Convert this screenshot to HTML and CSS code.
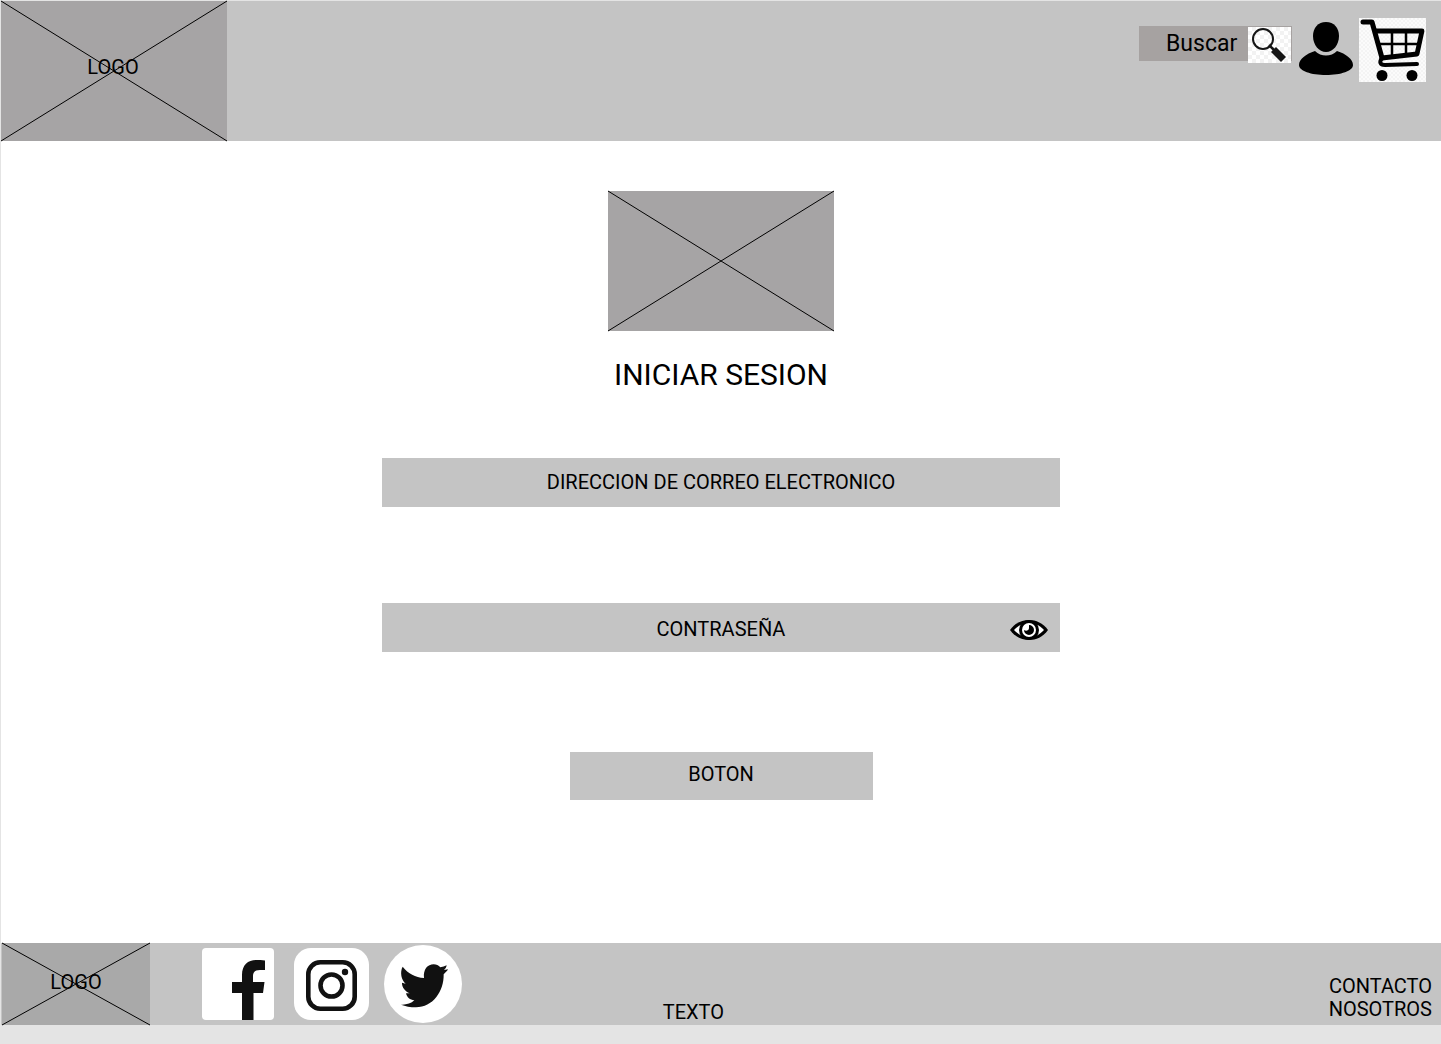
FILE: index.html
```html
<!DOCTYPE html>
<html lang="es">
<head>
  <meta charset="utf-8">
  <meta name="viewport" content="width=device-width, initial-scale=1">
  <title>Iniciar sesion</title>
  <link rel="stylesheet" href="styles.css">
</head>
<body>
  <header class="header">
    <a class="logo" href="#">
      <svg class="cross" viewBox="0 0 100 100" preserveAspectRatio="none" aria-hidden="true"><path d="M0 0 100 100M100 0 0 100"/></svg>
      <span class="logo-text">LOGO</span>
    </a>
    <div class="tools">
      <form class="search">
        <input class="search-input" type="text" placeholder="Buscar" aria-label="Buscar">
        <button class="search-button" type="button" aria-label="Buscar">
          <svg viewBox="0 0 43 36" width="43" height="36" aria-hidden="true">
            <circle cx="15" cy="12" r="10" fill="none" stroke="#151515" stroke-width="2"/>
            <path d="M21 18l5 5" stroke="#151515" stroke-width="2.500"/>
            <path d="M23 25l5-5 10 10-5 5z" fill="#151515"/>
          </svg>
        </button>
      </form>
      <a class="user" href="#" aria-label="Mi cuenta">
        <svg viewBox="0 0 54 53" width="54" height="53" aria-hidden="true">
          <path d="M27 0c8 0 13 6 13 14 0 9-6 16-13 16s-13-7-13-16C14 6 19 0 27 0z"/>
          <path d="M16 29c6 6 16 6 22 0 9 3 16 8 16 14 0 6-12 10-27 10S0 49 0 43c0-6 7-11 16-14z"/>
        </svg>
      </a>
      <a class="cart" href="#" aria-label="Carrito">
        <svg viewBox="0 0 67 64" width="67" height="64" aria-hidden="true">
          <g fill="none" stroke="#000" stroke-linecap="round" stroke-linejoin="round">
            <path d="M4 4h9l10 36" stroke-width="5"/>
            <path d="M17 13h46l-5 23-35 4" stroke-width="4.800"/>
            <path d="M23 40c-3 4-2 7 3 7l32-1" stroke-width="4"/>
            <path d="M33 14v24M47 14v23M20 26h40" stroke-width="2.500"/>
          </g>
          <circle cx="23" cy="57.500" r="5.500"/>
          <circle cx="53" cy="57.500" r="5.500"/>
        </svg>
      </a>
    </div>
  </header>

  <main class="main">
    <div class="picture">
      <svg class="cross" viewBox="0 0 100 100" preserveAspectRatio="none" aria-hidden="true"><path d="M0 0 100 100M100 0 0 100"/></svg>
    </div>
    <h1 class="title">INICIAR SESION</h1>
    <form class="form">
      <input class="field" type="email" placeholder="DIRECCION DE CORREO ELECTRONICO" aria-label="Direccion de correo electronico">
      <div class="password">
        <input class="field" type="password" placeholder="CONTRASEÑA" aria-label="Contraseña">
        <button class="eye" type="button" aria-label="Mostrar contraseña">
          <svg viewBox="0 0 38 20" width="38" height="20" aria-hidden="true">
            <path d="M0 10C5 3 12 0 19 0s14 3 19 10c-5 7-12 10-19 10S5 17 0 10z"/>
            <path d="M4 10C9 5 13 3 19 3s10 2 15 7c-5 5-9 7-15 7S9 15 4 10z" fill="#fff"/>
            <circle cx="19" cy="10" r="10"/>
            <circle cx="19" cy="10" r="7" fill="#fff"/>
            <path d="M19 5a5 5 0 1 1-5 5c2 1.500 5 .5 5-2z"/>
          </svg>
        </button>
      </div>
      <button class="submit" type="button">BOTON</button>
    </form>
  </main>

  <footer class="footer">
    <div class="footer-left">
      <a class="logo logo-small" href="#">
        <svg class="cross" viewBox="0 0 100 100" preserveAspectRatio="none" aria-hidden="true"><path d="M0 0 100 100M100 0 0 100"/></svg>
        <span class="logo-text">LOGO</span>
      </a>
      <nav class="social" aria-label="Redes sociales">
        <a href="#" aria-label="Facebook">
          <svg viewBox="0 0 72 72" width="72" height="72" aria-hidden="true">
            <rect width="72" height="72" rx="4" fill="#fff"/>
            <path d="M40 72V45H30V34h10v-7c0-10 6-15 14-15 3 0 6 0 9 .5V22h-5c-5 0-7 2-7 6v6h11.500L61 45H51.500v27z" fill="#111"/>
          </svg>
        </a>
        <a href="#" aria-label="Instagram">
          <svg viewBox="0 0 75 72" width="75" height="72" aria-hidden="true">
            <rect width="75" height="72" rx="17" fill="#fff"/>
            <g fill="none" stroke="#111" stroke-width="4.600">
              <rect x="14.300" y="14.300" width="46.400" height="46.400" rx="12"/>
              <circle cx="37.500" cy="37.500" r="11"/>
            </g>
            <circle cx="51" cy="24" r="3.200" fill="#111"/>
          </svg>
        </a>
        <a href="#" aria-label="Twitter">
          <svg viewBox="26 29 234 234" width="78" height="78" aria-hidden="true">
            <circle cx="143" cy="146" r="117" fill="#fff"/>
            <path d="M82 94C99 115 120 126 146 128 143 102 157 87 175 87 183 87 190 90 195 96 202 95 208 93 214 90 213 96 210 101 206 104L218 102C215 108 210 112 205 117 206 169 172 216 122 216 105 216 90 213 77 208 92 209 107 205 117 195 104 194 95 186 92 174H103C89 168 80 157 80 144V142L91 145C78 134 73 110 82 94z" fill="#111"/>
          </svg>
        </a>
      </nav>
    </div>
    <p class="footer-text">TEXTO</p>
    <nav class="footer-links">
      <a href="#">CONTACTO</a>
      <a href="#">NOSOTROS</a>
    </nav>
  </footer>
</body>
</html>
```
FILE: styles.css
```css
* {
  box-sizing: border-box;
}

body {
  margin: 0;
  padding: 1px 0 0 1px;
  min-height: 100vh;
  background: #e4e4e4;
  color: #000;
  font: 20px/23px Roboto, "Liberation Sans", sans-serif;
}

svg {
  display: block;
}

a {
  color: inherit;
  text-decoration: none;
}

input,
button {
  margin: 0;
  padding: 0;
  border: 0;
  border-radius: 0;
  color: inherit;
  font: inherit;
}

input::placeholder {
  color: #000;
  opacity: 1;
}

button {
  cursor: pointer;
}

/* Header */

.header {
  display: flex;
  justify-content: space-between;
  align-items: flex-start;
  background: #c4c4c4;
}

.logo,
.picture {
  position: relative;
  display: flex;
  justify-content: center;
  align-items: center;
  width: 226px;
  height: 140px;
  background: #a6a4a5;
}

.logo {
  padding: 0 2px 8px 0;
}

.cross {
  position: absolute;
  inset: 0;
  width: 100%;
  height: 100%;
  overflow: visible;
}

.cross path {
  fill: none;
  stroke: #000;
  stroke-width: 1px;
  vector-effect: non-scaling-stroke;
}

.logo-text {
  position: relative;
}

.tools {
  display: flex;
  align-items: flex-start;
  gap: 6px;
  padding: 17px 15px 0 0;
}

.search {
  display: flex;
  height: 35px;
  margin: 8px 1px 0 0;
  padding-right: 1px;
  background: #a6a2a1;
}

.search-input {
  width: 109px;
  height: 35px;
  padding-left: 27px;
  background: transparent;
  font-size: 23px;
}

.search-button {
  width: 43px;
  height: 36px;
  margin-top: 1px;
  background: repeating-conic-gradient(#f2f2f2 0 25%, #fff 0 50%) 0 0 / 8px 8px;
}

.user {
  margin-top: 4px;
}

.cart {
  background: repeating-conic-gradient(#f4f4f4 0 25%, #fbfbfb 0 50%) 0 0 / 4px 4px;
}

/* Sign-in */

.main {
  display: flex;
  flex-direction: column;
  align-items: center;
  padding: 50px 16px 143px;
  background: #fff;
}

.title {
  margin: 26px 0 66px;
  font-size: 30px;
  font-weight: 400;
  line-height: 35px;
}

.form {
  display: flex;
  flex-direction: column;
  align-items: center;
  width: 100%;
  max-width: 678px;
}

.field {
  width: 100%;
  height: 49px;
  padding-bottom: 1px;
  background: #c4c4c4;
  text-align: center;
}

.password {
  position: relative;
  width: 100%;
  height: 49px;
  margin: 96px 0 100px;
}

.password .field {
  padding: 3px 0 0;
}

.eye {
  position: absolute;
  top: 17px;
  right: 12px;
  background: none;
}

.submit {
  width: 303px;
  height: 48px;
  padding-bottom: 4px;
  background: #c4c4c4;
}

/* Footer */

.footer {
  display: grid;
  grid-template-columns: 12fr auto 13fr;
  background: #c4c4c4;
}

.footer-left,
.social {
  display: flex;
  align-items: center;
}

.logo-small {
  width: 148px;
  height: 82px;
  margin-left: 1px;
  padding: 0 0 4px;
  background: #a9a9a9;
}

.social {
  gap: 15px;
  margin-left: 52px;
}

.social a:first-child {
  margin-right: 5px;
}

.footer-text {
  align-self: end;
  margin: 0;
  padding-bottom: 1px;
}

.footer-links {
  display: flex;
  flex-direction: column;
  align-items: flex-end;
  align-self: end;
  padding: 0 9px 4px 0;
}
```
